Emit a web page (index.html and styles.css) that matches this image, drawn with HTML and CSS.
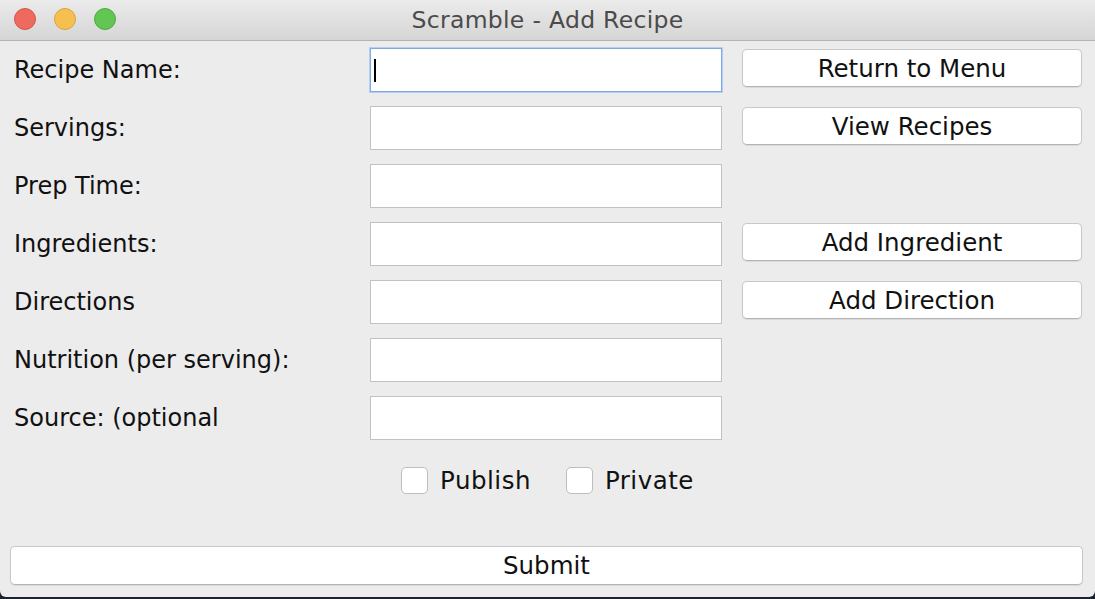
FILE: index.html
```html
<!DOCTYPE html>
<html lang="en">
<head>
    <meta charset="UTF-8">
    <meta name="viewport" content="width=device-width, initial-scale=1.0">
    <title>Scramble - Add Recipe</title>
    <link rel="stylesheet" href="styles.css">
</head>
<body>
    <div class="window">
        <div class="titlebar">
            <div class="lights">
                <span class="light red"></span>
                <span class="light yellow"></span>
                <span class="light green"></span>
            </div>
            <div class="title">Scramble - Add Recipe</div>
        </div>
        <div class="content">
            <div class="form">
                <label class="label">Recipe Name:</label>
                <div class="field focused"><span class="caret"></span></div>
                <button class="btn">Return to Menu</button>

                <label class="label">Servings:</label>
                <div class="field"></div>
                <button class="btn">View Recipes</button>

                <label class="label">Prep Time:</label>
                <div class="field"></div>
                <div></div>

                <label class="label">Ingredients:</label>
                <div class="field"></div>
                <button class="btn">Add Ingredient</button>

                <label class="label">Directions</label>
                <div class="field"></div>
                <button class="btn">Add Direction</button>

                <label class="label">Nutrition (per serving):</label>
                <div class="field"></div>
                <div></div>

                <label class="label">Source: (optional</label>
                <div class="field"></div>
                <div></div>
            </div>
            <div class="checks">
                <label class="check"><span class="box"></span>Publish</label>
                <label class="check"><span class="box"></span>Private</label>
            </div>
            <button class="btn submit">Submit</button>
        </div>
    </div>
</body>
</html>
```

FILE: styles.css
```css
body {
    margin: 0;
    background-color: #1b2330;
    font-family: "DejaVu Sans", "Noto Sans", sans-serif;
    color: #111;
    height: 599px;
    overflow: hidden;
}
.window {
    width: 1095px;
    height: 597px;
    background-color: #ececec;
    border-radius: 0 0 6px 6px;
    overflow: hidden;
}
.titlebar {
    position: relative;
    height: 40px;
    background: linear-gradient(#ebebeb, #d5d5d5);
    border-bottom: 1px solid #b3b3b3;
    display: flex;
    align-items: center;
    justify-content: center;
}
.lights {
    position: absolute;
    left: 14px;
    top: 8px;
    display: flex;
    gap: 18px;
}
.light {
    width: 22px;
    height: 22px;
    border-radius: 50%;
    box-sizing: border-box;
}
.red {
    background-color: #ee6a5f;
    border: 1px solid #d4524a;
}
.yellow {
    background-color: #f5c04f;
    border: 1px solid #d9a33a;
}
.green {
    background-color: #62c554;
    border: 1px solid #4ca93f;
}
.title {
    font-size: 23.5px;
    color: #4b4b4b;
    letter-spacing: 0.3px;
}
.content {
    padding-top: 7px;
}
.form {
    display: grid;
    grid-template-columns: 336px 352px 340px;
    grid-auto-rows: 44px;
    column-gap: 20px;
    row-gap: 14px;
    padding-left: 14px;
}
.label {
    font-size: 24px;
    display: flex;
    align-items: center;
    padding-bottom: 1px;
    white-space: nowrap;
}
.field {
    background-color: #fff;
    border: 1px solid #c2c2c2;
    box-sizing: border-box;
    display: flex;
    align-items: center;
    padding-left: 3px;
}
.field.focused {
    border-color: #7ea9e3;
    box-shadow: 0 0 0 1px #b6cff0;
}
.caret {
    width: 2px;
    height: 23px;
    background-color: #000;
}
.btn {
    margin-top: 1px;
    height: 38px;
    background-color: #fff;
    border: 1px solid #c8c8c8;
    border-bottom-color: #b4b4b4;
    border-radius: 5px;
    box-shadow: 0 1px 1px rgba(0, 0, 0, 0.08);
    font-family: "DejaVu Sans", "Noto Sans", sans-serif;
    font-size: 24.5px;
    color: #111;
    padding: 0;
}
.checks {
    display: flex;
    justify-content: center;
    gap: 35px;
    margin-top: 27px;
    height: 27px;
}
.check {
    display: flex;
    align-items: center;
    gap: 12px;
    font-size: 24.5px;
    letter-spacing: 0.5px;
}
.box {
    width: 27px;
    height: 27px;
    box-sizing: border-box;
    background-color: #fff;
    border: 1px solid #bdbdbd;
    border-radius: 5px;
}
.submit {
    display: block;
    width: 1073px;
    height: 39px;
    margin: 52px 0 0 10px;
}
```
